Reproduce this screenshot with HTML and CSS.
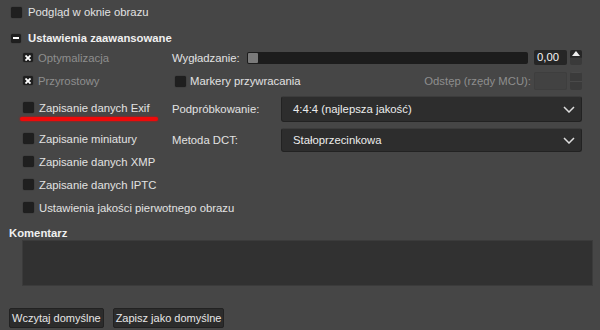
FILE: index.html
```html
<!DOCTYPE html>
<html lang="pl">
<head>
    <meta charset="UTF-8">
    <title>Eksport JPEG</title>
    <link rel="stylesheet" href="styles.css">
</head>
<body>
    <div class="dialog">
        <label class="check top-check"><span class="box"></span>Podgląd w oknie obrazu</label>

        <div class="section-title"><span class="box minus"><span></span></span>Ustawienia zaawansowane</div>

        <div class="advanced">
            <div class="left-col">
                <div class="opt dim"><span class="box cross"><svg width="6" height="6" viewBox="0 0 6 6"><path d="M0.5 0.5 L5.5 5.5 M5.5 0.5 L0.5 5.5" stroke="#fff" stroke-width="1.8"/></svg></span>Optymalizacja</div>
                <div class="opt dim"><span class="box cross"><svg width="6" height="6" viewBox="0 0 6 6"><path d="M0.5 0.5 L5.5 5.5 M5.5 0.5 L0.5 5.5" stroke="#fff" stroke-width="1.8"/></svg></span>Przyrostowy</div>
                <div class="opt exif"><span class="box"></span>Zapisanie danych Exif<span class="marker"></span></div>
                <div class="opt thumb"><span class="box"></span>Zapisanie miniatury</div>
                <div class="opt"><span class="box"></span>Zapisanie danych XMP</div>
                <div class="opt"><span class="box"></span>Zapisanie danych IPTC</div>
                <div class="opt"><span class="box"></span>Ustawienia jakości pierwotnego obrazu</div>
            </div>

            <div class="right-col">
                <div class="row smooth-row">
                    <span class="label">Wygładzanie:</span>
                    <div class="slider"><span class="handle"></span></div>
                    <div class="spin">
                        <span class="spin-value">0,00</span>
                        <span class="spin-btns">
                            <span class="up"><svg width="8" height="5" viewBox="0 0 8 5"><path d="M0 5 L4 0 L8 5 Z" fill="#eee"/></svg></span>
                            <span class="down"></span>
                        </span>
                    </div>
                </div>
                <div class="row marker-row">
                    <span class="check"><span class="box"></span>Markery przywracania</span>
                    <span class="label dim interval">Odstęp (rzędy MCU):</span>
                    <div class="spin disabled">
                        <span class="spin-value"></span>
                        <span class="spin-btns">
                            <span class="up"></span>
                            <span class="down"></span>
                        </span>
                    </div>
                </div>
                <div class="row combo-row first">
                    <span class="label combo-label">Podpróbkowanie:</span>
                    <div class="combo">
                        <span>4:4:4 (najlepsza jakość)</span>
                        <svg width="12" height="7" viewBox="0 0 12 7"><path d="M1 1 L6 6 L11 1" fill="none" stroke="#ddd" stroke-width="1.5"/></svg>
                    </div>
                </div>
                <div class="row combo-row">
                    <span class="label combo-label">Metoda DCT:</span>
                    <div class="combo">
                        <span>Stałoprzecinkowa</span>
                        <svg width="12" height="7" viewBox="0 0 12 7"><path d="M1 1 L6 6 L11 1" fill="none" stroke="#ddd" stroke-width="1.5"/></svg>
                    </div>
                </div>
            </div>
        </div>

        <div class="comment-title">Komentarz</div>
        <div class="comment"></div>

        <div class="buttons">
            <button class="btn">Wczytaj domyślne</button>
            <button class="btn">Zapisz jako domyślne</button>
        </div>
    </div>
</body>
</html>
```

FILE: styles.css
```css
body {
    margin: 0;
    background-color: #464646;
    font-family: "Liberation Sans", Arial, sans-serif;
    font-size: 11.3px;
    color: #e2e2e2;
    width: 600px;
    height: 330px;
    overflow: hidden;
}
.dialog {
    padding: 0 7px 0 9px;
}
.box {
    display: inline-flex;
    align-items: center;
    justify-content: center;
    width: 11px;
    height: 11px;
    border-radius: 2px;
    background: #1f1f1f;
    box-shadow: 0 0 1px #111;
    margin-right: 6px;
    flex: none;
}
.check {
    display: flex;
    align-items: center;
    white-space: nowrap;
}
.top-check {
    height: 24px;
    padding-left: 2px;
}
.section-title {
    display: flex;
    align-items: center;
    height: 16px;
    margin-top: 6px;
    padding-left: 2px;
    font-weight: bold;
    color: #f0f0f0;
}
.box.minus {
    width: 10px;
    height: 9px;
    margin-right: 7px;
}
.box.minus span {
    width: 6px;
    height: 2px;
    background: #fff;
}
.box.cross {
    width: 10px;
    height: 9px;
}
.advanced {
    display: flex;
    padding-right: 11px;
}
.left-col {
    width: 149px;
    flex: none;
    padding-left: 14px;
}
.opt {
    display: flex;
    align-items: center;
    height: 23px;
    white-space: nowrap;
}
.opt .box {
    margin-right: 5px;
}
.dim {
    color: #8e8e8e;
}
.opt.exif {
    position: relative;
    margin-top: 4px;
}
.opt.thumb {
    margin-top: 8px;
}
.marker {
    position: absolute;
    left: -3px;
    top: 21px;
    width: 138px;
    height: 4px;
    border-radius: 2px;
    background: #ee0a0a;
    box-shadow: 0 0 2px #e00;
}
.right-col {
    flex: 1;
    display: flex;
    flex-direction: column;
}
.row {
    display: flex;
    align-items: center;
    height: 23px;
    white-space: nowrap;
}
.smooth-row .label {
    width: 75px;
}
.slider {
    flex: 1;
    height: 12px;
    background: #1c1c1c;
    border-radius: 2px;
    display: flex;
    align-items: center;
    padding-left: 1px;
    margin-right: 6px;
}
.handle {
    width: 10px;
    height: 10px;
    background: #7a7a7a;
    border-radius: 1px;
}
.spin {
    display: flex;
    align-items: stretch;
}
.spin-value {
    width: 30px;
    height: 15px;
    line-height: 15px;
    background: #262626;
    color: #f4f4f4;
    padding-left: 3px;
    border-radius: 2px;
}
.spin-btns {
    display: flex;
    flex-direction: column;
    width: 12px;
    margin-left: 3px;
    border-radius: 2px;
    overflow: hidden;
}
.spin-btns .up {
    flex: 1;
    background: #262626;
    display: flex;
    align-items: center;
    justify-content: center;
}
.spin-btns .down {
    flex: 1;
    background: #3a3a3a;
    border-top: 1px solid #2c2c2c;
}
.marker-row {
    height: 24px;
}
.marker-row .check {
    padding-left: 3px;
}
.marker-row .box {
    margin-right: 4px;
}
.interval {
    margin-left: auto;
    margin-right: 3px;
}
.spin.disabled .spin-value {
    height: 18px;
    background: #424242;
    box-shadow: inset 0 0 0 1px #3e3e3e;
}
.spin.disabled .spin-btns .up,
.spin.disabled .spin-btns .down {
    background: #3b3b3b;
    border-top: 1px solid #4a4a4a;
}
.combo-row {
    height: 26px;
    margin-top: 3px;
}
.combo-row + .combo-row {
    margin-top: 6px;
    height: 24px;
}
.combo-label {
    width: 109px;
}
.combo {
    flex: 1;
    height: 100%;
    box-sizing: border-box;
    display: flex;
    align-items: center;
    justify-content: space-between;
    padding: 0 6px 0 11px;
    background: #2d2d2d;
    border: 1px solid #222;
    border-top-color: #3c3c3c;
    border-radius: 3px;
    color: #ececec;
}
.comment-title {
    font-weight: bold;
    color: #f0f0f0;
    margin-top: 8px;
    height: 13px;
}
.comment {
    margin: 0 0 0 13px;
    height: 44px;
    background: #313131;
    border: 1px solid #3b3b3b;
}
.buttons {
    display: flex;
    gap: 9px;
    margin-top: 22px;
}
.btn {
    font-family: "Liberation Sans", Arial, sans-serif;
    font-size: 11px;
    color: #e6e6e6;
    background: #2c2c2c;
    border: 1px solid #222;
    border-radius: 2px;
    height: 20px;
    padding: 0 2px;
}
```
